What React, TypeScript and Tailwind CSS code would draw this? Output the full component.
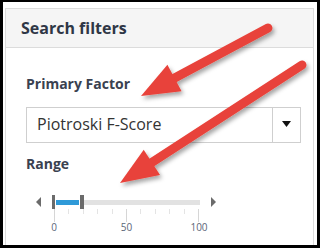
import React from 'react'

// red call-out arrow with a triangular head
function CalloutArrow({ tail, tip }: { tail: [number, number]; tip: [number, number] }) {
  const dx = tip[0] - tail[0]
  const dy = tip[1] - tail[1]
  const len = Math.hypot(dx, dy)
  const ux = dx / len
  const uy = dy / len
  const headLen = 38
  const halfW = 15
  const bx = tip[0] - ux * headLen
  const by = tip[1] - uy * headLen
  const px = -uy
  const py = ux
  const pts = `${tip[0]},${tip[1]} ${bx + px * halfW},${by + py * halfW} ${bx - px * halfW},${by - py * halfW}`
  return (
    <g filter="url(#arrowShadow)">
      <line x1={tail[0]} y1={tail[1]} x2={bx + ux * 2} y2={by + uy * 2} stroke="#e8433a" strokeWidth={9} strokeLinecap="round" />
      <polygon points={pts} fill="#e8433a" />
    </g>
  )
}

function RangeSlider() {
  const ticks = Array.from({ length: 11 }, (_, i) => i)
  return (
    <div className="mt-[21px] pl-[10px]">
      <div className="flex items-center h-[14px]">
        <svg width="5" height="10" viewBox="0 0 5 10" className="mr-[11px]">
          <polygon points="5,0 0,5 5,10" fill="#6b6b6b" />
        </svg>
        <div className="flex items-center w-[148px] h-[14px]">
          <div className="w-[3px] h-[14px] bg-[#6b6b6b]" />
          <div className="w-[23px] h-[5px] bg-[#2f9ad8] mx-px" />
          <div className="w-[4px] h-[14px] bg-[#6b6b6b]" />
          <div className="flex-1 h-[5px] bg-[#e2e2e2]" />
        </div>
        <svg width="5" height="10" viewBox="0 0 5 10" className="ml-[11px]">
          <polygon points="0,0 5,5 0,10" fill="#6b6b6b" />
        </svg>
      </div>
      <div className="ml-[18px] w-[145px] flex justify-between items-start">
        {ticks.map((t) => (
          <div key={t} className={t % 5 === 0 ? 'w-px h-[13px] bg-[#d6d6d6]' : 'w-px h-[5px] bg-[#e4e4e4]'} />
        ))}
      </div>
      <div className="ml-[18px] w-[145px] flex justify-between text-[10px] leading-[10px] text-[#5b6678]">
        <div className="w-0 flex justify-center">0</div>
        <div className="w-0 flex justify-center">50</div>
        <div className="w-0 flex justify-center">100</div>
      </div>
    </div>
  )
}

export default function App() {
  return (
    <div className="w-[320px] h-[248px] bg-black pl-[3px] pt-[2px] pr-[3px] pb-[3px]">
      <div className="relative h-full bg-white pl-[2px] pt-[6px] pr-[3px] font-['Open_Sans',sans-serif] overflow-hidden">
        <div className="h-full border-l border-t border-r border-[#dcdcdc]">
          {/* Header */}
          <div className="h-[39px] bg-[#f5f5f5] border-b border-[#dcdcdc] pl-[15px] flex items-center">
            <h2 className="text-[16px] font-bold text-[#2f3746]">Search filters</h2>
          </div>

          {/* Body */}
          <div className="pl-[20px] pr-[12px] pt-[26px]">
            <div className="text-[14px] leading-[20px] font-bold text-[#3a4150]">Primary Factor</div>
            <div className="mt-[13px] h-[36px] border border-[#cfcfcf] flex">
              <div className="flex-1 pl-[10px] pt-[5px] text-[16px] leading-[22px] text-[#333]">Piotroski F-Score</div>
              <div className="w-[28px] border-l border-[#cfcfcf] flex items-center justify-center pb-[2px]">
                <svg width="9" height="6" viewBox="0 0 9 6">
                  <polygon points="0,0 9,0 4.5,6" fill="#111" />
                </svg>
              </div>
            </div>

            <div className="mt-[11px] text-[14px] leading-[20px] font-bold text-[#3a4150]">Range</div>
            <RangeSlider />
          </div>
        </div>

        {/* Call-out arrows */}
        <svg className="absolute left-[-3px] top-[-2px] pointer-events-none" width="320" height="248">
          <defs>
            <filter id="arrowShadow" x="-20%" y="-20%" width="140%" height="140%">
              <feDropShadow dx="2" dy="3" stdDeviation="2" floodColor="#000" floodOpacity="0.35" />
            </filter>
          </defs>
          <CalloutArrow tail={[268, 28]} tip={[141, 96]} />
          <CalloutArrow tail={[302, 65]} tip={[120, 183]} />
        </svg>
      </div>
    </div>
  )
}
